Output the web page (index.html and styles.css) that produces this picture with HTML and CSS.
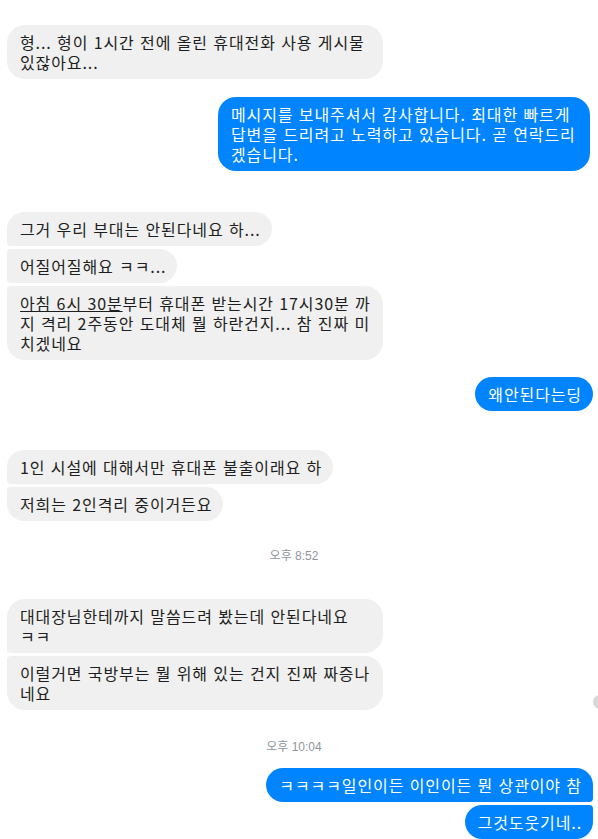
FILE: index.html
```html
<!DOCTYPE html>
<html lang="ko">
<head>
<meta charset="utf-8">
<title>Messenger</title>
<link rel="stylesheet" href="styles.css">
</head>
<body>
<div class="chat">
  <div class="group in g1">
    <div class="bubble solo wrap">형... 형이 1시간 전에 올린 휴대전화 사용 게시물<br>있잖아요...</div>
  </div>

  <div class="group out g2">
    <div class="bubble solo wrap">메시지를 보내주셔서 감사합니다. 최대한 빠르게<br>답변을 드리려고 노력하고 있습니다. 곧 연락드리<br>겠습니다.</div>
  </div>

  <div class="group in g3">
    <div class="bubble first">그거 우리 부대는 안된다네요 하...</div>
    <div class="bubble mid">어질어질해요 ㅋㅋ...</div>
    <div class="bubble last wrap"><span class="link">아침 6시 30분</span>부터 휴대폰 받는시간 17시30분 까<br>지 격리 2주동안 도대체 뭘 하란건지... 참 진짜 미<br>치겠네요</div>
  </div>

  <div class="group out g4">
    <div class="bubble solo">왜안된다는딩</div>
  </div>

  <div class="group in g5">
    <div class="bubble first">1인 시설에 대해서만 휴대폰 불출이래요 하</div>
    <div class="bubble last">저희는 2인격리 중이거든요</div>
  </div>

  <div class="time t1">오후 8:52</div>

  <div class="group in g6">
    <div class="bubble first wrap">대대장님한테까지 말씀드려 봤는데 안된다네요<br>ㅋㅋ</div>
    <div class="bubble last wrap">이럴거면 국방부는 뭘 위해 있는 건지 진짜 짜증나<br>네요</div>
    <span class="seen"></span>
  </div>

  <div class="time t2">오후 10:04</div>

  <div class="group out g7">
    <div class="bubble first">ㅋㅋㅋㅋ일인이든 이인이든 뭔 상관이야 참</div>
    <div class="bubble last">그것도웃기네..</div>
  </div>
</div>
</body>
</html>
```

FILE: styles.css
```css
* { box-sizing: border-box; }

html, body {
  margin: 0;
  padding: 0;
  background: #ffffff;
  overflow: hidden;
}

body {
  font-family: "Noto Sans CJK KR", "Noto Sans", sans-serif;
  font-size: 16px;
  line-height: 20px;
  letter-spacing: 0.9px;
  color: #1c1e21;
}

.chat {
  padding: 25px 5px 0 7px;
  display: flex;
  flex-direction: column;
}

.group {
  display: flex;
  flex-direction: column;
  gap: 3px;
  position: relative;
}

.group.in { align-items: flex-start; }
.group.out { align-items: flex-end; }

.bubble {
  white-space: nowrap;
  padding: 7px 11px 7px 13px;
  border-radius: 18px;
}

.in .bubble {
  background: #f1f0f0;
  color: #1c1e21;
}

.out .bubble {
  background: #0084ff;
  color: #ffffff;
}

.in .bubble.wrap { width: 376px; }
.out .bubble.wrap { width: 372px; }

.in .bubble.first { border-bottom-left-radius: 4px; }
.in .bubble.mid { border-top-left-radius: 4px; border-bottom-left-radius: 4px; }
.in .bubble.last { border-top-left-radius: 4px; }

.out .bubble.first { border-bottom-right-radius: 4px; }
.out .bubble.last { border-top-right-radius: 4px; }

.link { text-decoration: underline; }

.g2 { margin-top: 18px; margin-right: 3px; }
.g3 { margin-top: 41px; }
.g4 { margin-top: 17px; }
.g5 { margin-top: 39px; }
.g6 { margin-top: 35px; }
.g7 { margin-top: 13px; }

.time {
  text-align: center;
  font-family: "Liberation Sans", "Noto Sans CJK KR", sans-serif;
  font-size: 12px;
  line-height: 16px;
  letter-spacing: 0;
  color: #90949c;
  padding-right: 12px;
}

.t1 { margin-top: 27px; }
.t2 { margin-top: 29px; }

.seen {
  position: absolute;
  right: -14px;
  bottom: 1px;
  width: 14px;
  height: 14px;
  border-radius: 50%;
  background: #d8d8d8;
}
```
